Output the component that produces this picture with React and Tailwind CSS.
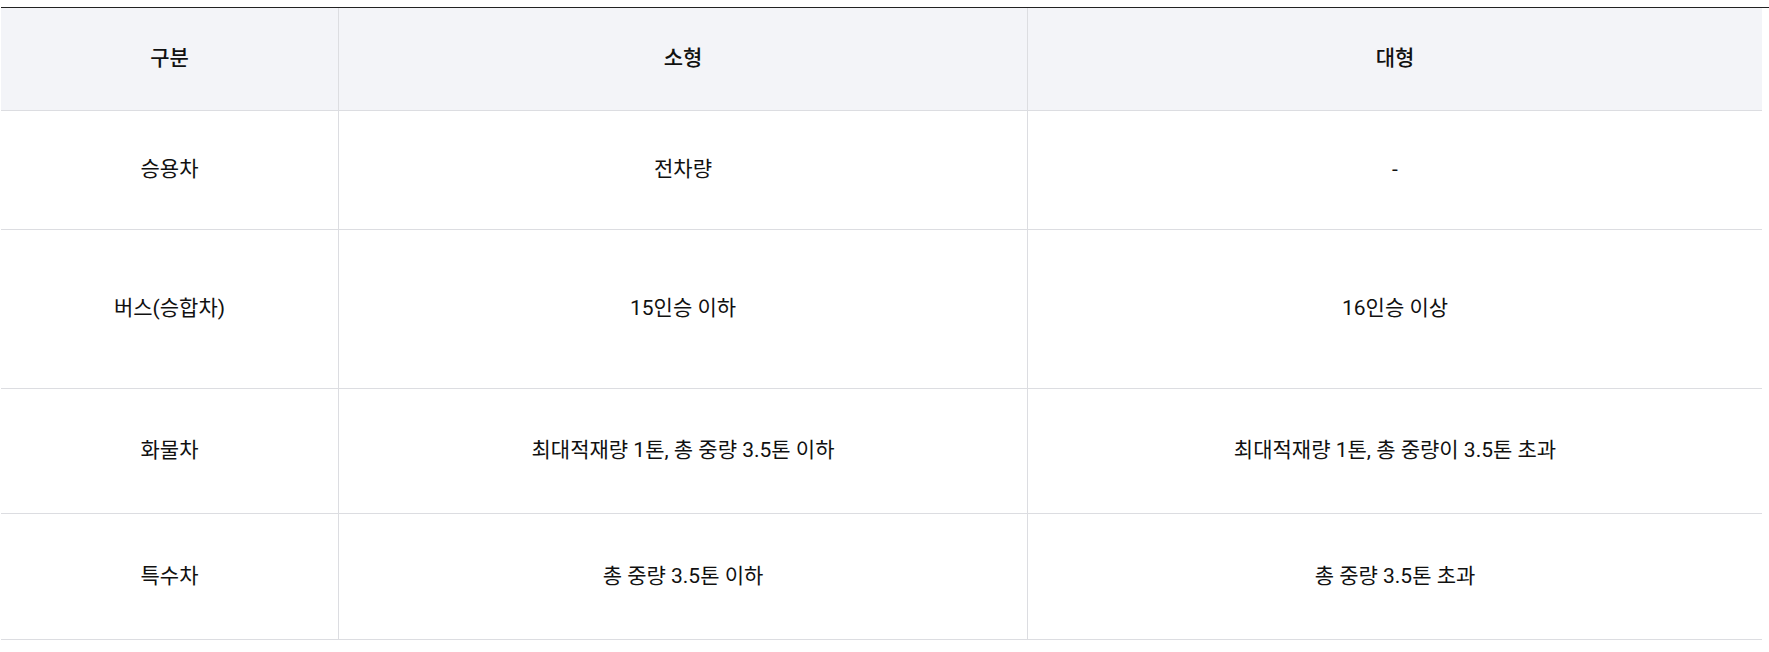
const rows = [
  { label: "승용차", small: "전차량", large: "-", h: "h-[119px]" },
  { label: "버스(승합차)", small: "15인승 이하", large: "16인승 이상", h: "h-[159px]" },
  {
    label: "화물차",
    small: "최대적재량 1톤, 총 중량 3.5톤 이하",
    large: "최대적재량 1톤, 총 중량이 3.5톤 초과",
    h: "h-[125px]",
  },
  { label: "특수차", small: "총 중량 3.5톤 이하", large: "총 중량 3.5톤 초과", h: "h-[126px]" },
];

export default function App() {
  return (
    <div
      className="bg-white pt-[7px] pl-[1px] text-[21px] text-[#111111]"
      style={{ fontFamily: 'Roboto, "Noto Sans CJK KR", sans-serif' }}
    >
      <div className="border-t border-[#222222]">
        <div className="w-[1761px]">
          <div className="flex h-[103px] border-b border-[#dcdde1] bg-[#f3f4f8] font-medium">
            <div className="w-[338px] flex items-center justify-center border-r border-[#dcdde1]">구분</div>
            <div className="w-[689px] flex items-center justify-center border-r border-[#dcdde1]">소형</div>
            <div className="w-[734px] flex items-center justify-center">대형</div>
          </div>
          {rows.map((r) => (
            <div key={r.label} className={"flex border-b border-[#dcdde1] " + r.h}>
              <div className="w-[338px] flex items-center justify-center border-r border-[#dcdde1]">{r.label}</div>
              <div className="w-[689px] flex items-center justify-center border-r border-[#dcdde1]">{r.small}</div>
              <div className="w-[734px] flex items-center justify-center">{r.large}</div>
            </div>
          ))}
        </div>
      </div>
    </div>
  );
}
